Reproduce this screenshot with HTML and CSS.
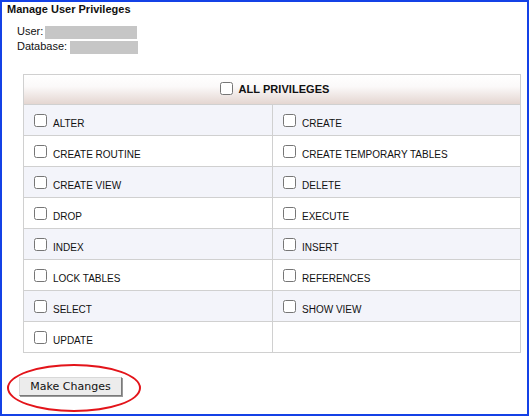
FILE: index.html
```html
<!DOCTYPE html>
<html lang="en">
  <head>
    <meta charset="UTF-8" />
    <title>Manage User Privileges</title>
    <link rel="stylesheet" href="styles.css">
  </head>
  <body>
    <div class="frame">
      <h1 class="title">Manage User Privileges</h1>
      <div class="info">
        <div class="info-row"><span>User:</span><span class="redact redact-user"></span></div>
        <div class="info-row"><span>Database:</span><span class="redact redact-db"></span></div>
      </div>

      <div class="privs">
        <label class="privs-head"><input type="checkbox" />ALL PRIVILEGES</label>

        <label class="cell alt"><input type="checkbox" />ALTER</label>
        <label class="cell alt"><input type="checkbox" />CREATE</label>

        <label class="cell"><input type="checkbox" />CREATE ROUTINE</label>
        <label class="cell"><input type="checkbox" />CREATE TEMPORARY TABLES</label>

        <label class="cell alt"><input type="checkbox" />CREATE VIEW</label>
        <label class="cell alt"><input type="checkbox" />DELETE</label>

        <label class="cell"><input type="checkbox" />DROP</label>
        <label class="cell"><input type="checkbox" />EXECUTE</label>

        <label class="cell alt"><input type="checkbox" />INDEX</label>
        <label class="cell alt"><input type="checkbox" />INSERT</label>

        <label class="cell"><input type="checkbox" />LOCK TABLES</label>
        <label class="cell"><input type="checkbox" />REFERENCES</label>

        <label class="cell alt"><input type="checkbox" />SELECT</label>
        <label class="cell alt"><input type="checkbox" />SHOW VIEW</label>

        <label class="cell"><input type="checkbox" />UPDATE</label>
        <div class="cell"></div>
      </div>

      <div class="actions">
        <button type="button" class="btn">Make Changes</button>
        <span class="ring"></span>
      </div>
    </div>
  </body>
</html>
```

FILE: styles.css
```css
body {
  margin: 0;
  font-family: "Liberation Sans", Arial, sans-serif;
  background: #fff;
  color: #000;
}

.frame {
  box-sizing: border-box;
  width: 529px;
  height: 416px;
  border: 2px solid #1441e6;
  padding: 1px 0 0 5px;
}

.title {
  margin: 0;
  font-size: 11px;
  line-height: 13px;
  font-weight: bold;
  color: #111;
}

.info {
  margin: 8px 0 0 10px;
  font-size: 11px;
  color: #111;
}
.info-row {
  display: flex;
  align-items: flex-start;
  height: 15px;
  line-height: 15px;
}
.redact {
  display: inline-block;
  height: 13px;
  margin: 2px 0 0 2px;
  background: #c6c6c6;
}
.redact-user {
  width: 92px;
}
.redact-db {
  width: 68px;
  margin-left: 3px;
}

.privs {
  display: grid;
  grid-template-columns: 248px 247px;
  gap: 1px;
  width: fit-content;
  margin: 20px 0 0 16px;
  border: 1px solid #d0d0d0;
  background: #d0d0d0;
}

.privs-head {
  grid-column: 1 / 3;
  height: 29px;
  padding-left: 5px;
  line-height: 29px;
  text-align: center;
  font-size: 11px;
  font-weight: bold;
  letter-spacing: 0.05px;
  color: #111;
  background: linear-gradient(#ffffff 0%, #fbf9f9 40%, #e4d6d1 100%);
}
.privs-head input {
  margin: 0 6px 0 0;
  vertical-align: -2px;
}

.cell {
  box-sizing: border-box;
  height: 30px;
  padding: 9px 0 0 10px;
  font-size: 10px;
  line-height: 14px;
  color: #111;
  background: #fff;
}
.cell.alt {
  background: #f3f4fa;
}
.cell input {
  margin: 0 6px 0 0;
}

input[type="checkbox"] {
  width: 13px;
  height: 13px;
}

.actions {
  position: relative;
  padding: 23px 0 0 12px;
}
.btn {
  box-sizing: border-box;
  width: 103px;
  height: 19px;
  padding: 0;
  font-family: "DejaVu Sans", Verdana, sans-serif;
  font-size: 11px;
  color: #111;
  background: #ececec;
  border: 1px solid #d8d8d8;
  border-right-color: #7a7a7a;
  border-bottom-color: #7a7a7a;
  box-shadow: 1px 1px 0 #9a9a9a;
  border-radius: 0;
}
.ring {
  position: absolute;
  left: 0;
  top: 11px;
  box-sizing: border-box;
  width: 134px;
  height: 48px;
  border: 2px solid #e3141a;
  border-radius: 50%;
  pointer-events: none;
}
```
